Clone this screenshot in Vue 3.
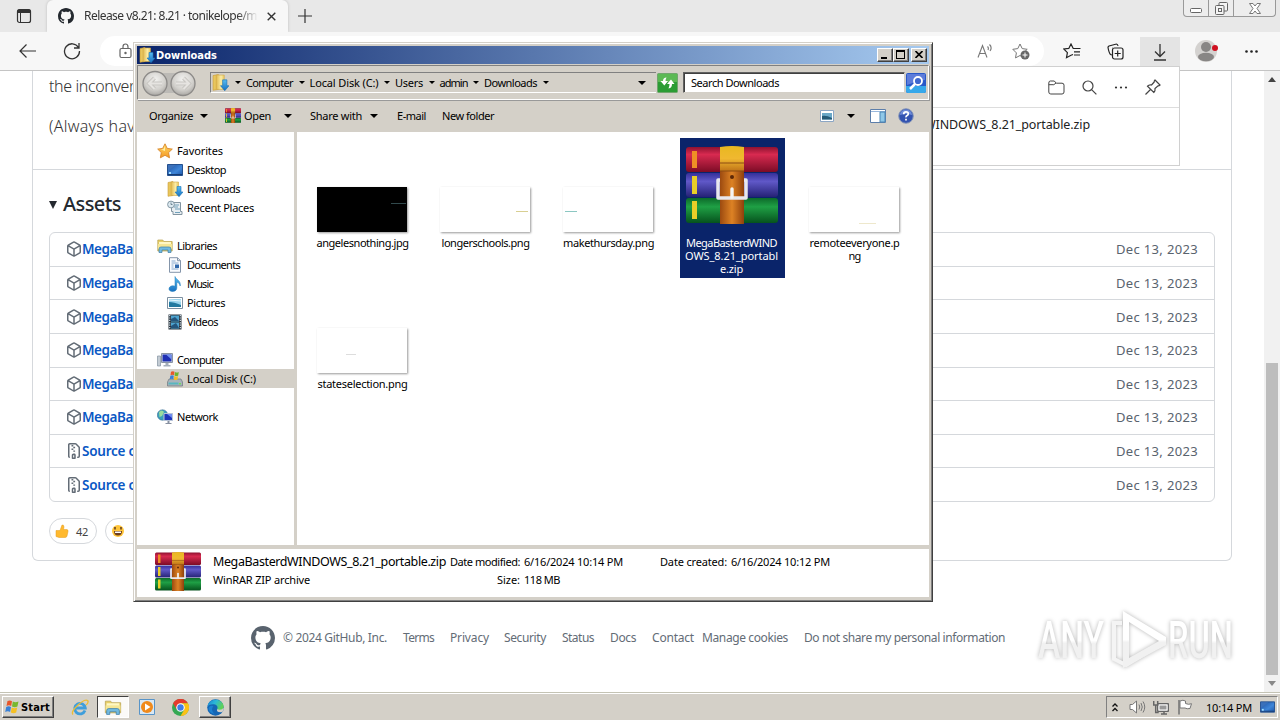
<script setup>
// Adjusts letter spacing so that a label takes the given width in pixels.
const vFit = {
  mounted(el, { value }) {
    const natural = el.getBoundingClientRect().width
    el.style.letterSpacing = (value - natural) / el.textContent.length + 'px'
  }
}

const assets = [
  ...Array.from({ length: 6 }, () => ({ icon: 'package', name: 'MegaBa', w: 51 })),
  { icon: 'zipfile', name: 'Source c', w: 53 },
  { icon: 'zipfile', name: 'Source c', w: 53 }
]
const footerLinks = [
  { t: 'Terms', w: 31, g: 16 }, { t: 'Privacy', w: 39, g: 16 }, { t: 'Security', w: 42, g: 15 },
  { t: 'Status', w: 32, g: 16 }, { t: 'Docs', w: 26, g: 16 }, { t: 'Contact', w: 42, g: 16 },
  { t: 'Manage cookies', w: 86, g: 8 }, { t: 'Do not share my personal information', w: 201, g: 16 }
]
const crumbs = [
  { t: 'Computer', w: 47 }, { t: 'Local Disk (C:)', w: 69 }, { t: 'Users', w: 28 },
  { t: 'admin', w: 28 }, { t: 'Downloads', w: 53 }
]
const tree = [
  { t: 'Favorites', i: 'star', w: 46, top: true }, { t: 'Desktop', i: 'desktop', w: 39 },
  { t: 'Downloads', i: 'downloads', w: 53 }, { t: 'Recent Places', i: 'recent', w: 67 }, null,
  { t: 'Libraries', i: 'libraries', w: 40, top: true }, { t: 'Documents', i: 'document', w: 53 },
  { t: 'Music', i: 'music', w: 26 }, { t: 'Pictures', i: 'picture', w: 38 },
  { t: 'Videos', i: 'video', w: 31 }, null,
  { t: 'Computer', i: 'computer', w: 47, top: true },
  { t: 'Local Disk (C:)', i: 'disk', w: 69, on: true }, null,
  { t: 'Network', i: 'network', w: 41, top: true }
]
const files = [
  { kind: 'black', lines: [['angelesnothing.jpg', 92]] },
  { kind: 'right', lines: [['longerschools.png', 88]] },
  { kind: 'left', lines: [['makethursday.png', 91]] },
  { kind: 'zip', on: true, lines: [['MegaBasterdWIND', 91], ['OWS_8.21_portabl', 93], ['e.zip', 23]] },
  { kind: 'low', lines: [['remoteeveryone.p', 90], ['ng', 12]] },
  { kind: 'mid', lines: [['stateselection.png', 90]] }
]
</script>

<template>
  <div class="screen">
    <svg class="defs" width="0" height="0">
      <defs>
        <linearGradient id="gRed" x1="0" y1="0" x2="0" y2="1"><stop offset="0" stop-color="#8e1230" /><stop offset=".3" stop-color="#d82a50" /><stop offset="1" stop-color="#7c0c26" /></linearGradient>
        <linearGradient id="gBlue" x1="0" y1="0" x2="0" y2="1"><stop offset="0" stop-color="#34309a" /><stop offset=".35" stop-color="#6058c8" /><stop offset="1" stop-color="#252275" /></linearGradient>
        <linearGradient id="gGreen" x1="0" y1="0" x2="0" y2="1"><stop offset="0" stop-color="#0d6a2a" /><stop offset=".35" stop-color="#1fa045" /><stop offset="1" stop-color="#06521d" /></linearGradient>
        <linearGradient id="gBelt" x1="0" y1="0" x2="1" y2="0"><stop offset="0" stop-color="#9c4a10" /><stop offset=".5" stop-color="#dd8224" /><stop offset="1" stop-color="#8f400c" /></linearGradient>
        <linearGradient id="gGold" x1="0" y1="0" x2="0" y2="1"><stop offset="0" stop-color="#e8b820" /><stop offset=".5" stop-color="#f0b830" /><stop offset="1" stop-color="#c07418" /></linearGradient>
        <linearGradient id="gSky" x1="0" y1="0" x2="1" y2="1"><stop offset="0" stop-color="#1d4e9e" /><stop offset=".6" stop-color="#3f86d8" /><stop offset="1" stop-color="#1c55a8" /></linearGradient>
        <linearGradient id="gFold" x1="0" y1="0" x2="1" y2="0"><stop offset="0" stop-color="#e0b84c" /><stop offset=".6" stop-color="#fbeca6" /><stop offset="1" stop-color="#e8c860" /></linearGradient>
        <linearGradient id="gArrow" x1="0" y1="0" x2="0" y2="1"><stop offset="0" stop-color="#58bdf2" /><stop offset="1" stop-color="#1670c0" /></linearGradient>
        <linearGradient id="gStar" x1="0" y1="0" x2="0" y2="1"><stop offset="0" stop-color="#ffd860" /><stop offset="1" stop-color="#f49a28" /></linearGradient>
        <linearGradient id="gEdge" x1="0" y1="0" x2="1" y2=".4"><stop offset="0" stop-color="#1b7fd0" /><stop offset=".5" stop-color="#2bb8d8" /><stop offset="1" stop-color="#5fd257" /></linearGradient>
        <linearGradient id="gMark" x1="0" y1="0" x2="0" y2="1"><stop offset=".5" stop-color="#fff" /><stop offset=".55" stop-color="#f1f1f1" /></linearGradient>
        <radialGradient id="gOrb" cx=".5" cy=".35" r=".6"><stop offset="0" stop-color="#f4f4f2" /><stop offset=".7" stop-color="#d2d0cc" /><stop offset="1" stop-color="#b2b0ac" /></radialGradient>
      </defs>
      <symbol id="winrar" viewBox="0 0 92 78" preserveAspectRatio="none">
        <rect x="0" y="1" width="92" height="25" rx="3" fill="url(#gRed)" />
        <rect x="0" y="27" width="92" height="24" rx="3" fill="url(#gBlue)" />
        <rect x="0" y="52" width="92" height="25" rx="3" fill="url(#gGreen)" />
        <path d="M6 5h5v17H6z" fill="#ef8f25" /><path d="M6 30h5v18H6zM6 55h5v18H6z" fill="#e9cf28" />
        <path d="M34 16h24v62H34z" fill="url(#gBelt)" />
        <path d="M34 1q12-2 24 0v24H34z" fill="url(#gGold)" />
        <path d="M34 17h24M34 25h24" stroke="#8c4c12" />
        <circle cx="46" cy="31" r="2" fill="#5c2808" />
        <path d="M34 34h-2v18h28V34h-2" fill="none" stroke="#e8e8ee" stroke-width="3.500" stroke-linejoin="round" />
        <path d="M46 43v8" stroke="#f4f4f4" stroke-width="3.400" stroke-linecap="round" />
      </symbol>
      <symbol id="github" viewBox="0 0 16 16"><path d="M8 0c4.42 0 8 3.58 8 8a8.013 8.013 0 0 1-5.45 7.59c-.4.08-.55-.17-.55-.38 0-.27.01-1.13.01-2.2 0-.75-.25-1.23-.54-1.48 1.78-.2 3.65-.88 3.65-3.95 0-.88-.31-1.59-.82-2.15.08-.2.36-1.02-.08-2.12 0 0-.67-.22-2.2.82-.64-.18-1.32-.27-2-.27-.68 0-1.36.09-2 .27-1.53-1.03-2.2-.82-2.2-.82-.44 1.1-.16 1.92-.08 2.12-.51.56-.82 1.28-.82 2.15 0 3.06 1.86 3.75 3.64 3.95-.23.2-.44.55-.51 1.07-.46.21-1.61.55-2.33-.66-.15-.24-.6-.83-1.23-.82-.67.01-.27.38.01.53.34.19.73.9.82 1.13.16.45.68 1.31 2.69.94 0 .67.01 1.3.01 1.49 0 .21-.15.45-.55.38A7.995 7.995 0 0 1 0 8c0-4.42 3.58-8 8-8Z" /></symbol>
      <symbol id="package" viewBox="0 0 16 16"><path d="m8.878.392 5.25 3.045c.54.314.872.89.872 1.514v6.098a1.75 1.75 0 0 1-.872 1.514l-5.25 3.045a1.75 1.75 0 0 1-1.756 0l-5.25-3.045A1.75 1.75 0 0 1 1 11.049V4.951c0-.624.332-1.201.872-1.514L7.122.392a1.75 1.75 0 0 1 1.756 0ZM7.875 1.69l-4.63 2.685L8 7.133l4.755-2.758-4.63-2.685a.248.248 0 0 0-.25 0ZM2.5 5.677v5.372c0 .09.047.171.125.216l4.625 2.683V8.432Zm6.25 8.271 4.625-2.683a.25.25 0 0 0 .125-.216V5.677L8.75 8.432Z" /></symbol>
      <symbol id="zipfile" viewBox="0 0 16 16"><path d="M3.5 1.75v11.5c0 .09.048.173.126.217a.75.75 0 0 1-.752 1.298A1.748 1.748 0 0 1 2 13.25V1.75C2 .784 2.784 0 3.75 0h5.586c.464 0 .909.185 1.237.513l2.914 2.914c.329.328.513.773.513 1.237v8.586A1.75 1.75 0 0 1 12.25 15h-.5a.75.75 0 0 1 0-1.5h.5a.25.25 0 0 0 .25-.25V4.664a.25.25 0 0 0-.073-.177L9.513 1.573a.25.25 0 0 0-.177-.073H3.75a.25.25 0 0 0-.25.25ZM8.75 10.5c.7.2 1 .9 1 1.75v3a.75.75 0 0 1-.75.75H6.5a.75.75 0 0 1-.75-.75v-3c0-.966.784-1.75 1.75-1.75ZM7.2 12.3v2.2h1v-2.200ZM5.500 2h1.800v1.400H5.500zM7.300 3.800h1.800v1.400H7.300zM5.500 5.600h1.800V7H5.500zM7.300 7.400h1.800v1.400H7.300z" /></symbol>
      <symbol id="star" viewBox="0 0 16 16"><path d="M8 .8 10.200 5.400l5.100.7-3.700 3.500.9 5.200L8 12.300l-4.600 2.500.9-5.200L.7 6.100l5-.7z" fill="url(#gStar)" stroke="#d8862a" stroke-width=".9" /><path d="M8 3v5l-4-1.400 2.500-.4z" fill="#fff0a8" /></symbol>
      <symbol id="desktop" viewBox="0 0 16 16"><path d="M.5 2.500h15v11H.5z" fill="url(#gSky)" stroke="#24508e" /><path d="M1 12.500h14" stroke="#163c74" /><path d="M2 10h2v2H2z" fill="#9fdcff" /><path d="M1 3h8l-8 6z" fill="#3c71ba" /></symbol>
      <symbol id="downloads" viewBox="0 0 16 16"><path d="M1 1.500 6 .5v14l-5 .8z" fill="#e8c65c" stroke="#c99c38" stroke-width=".6" /><path d="M4 1h7.500v13.500H4z" fill="url(#gFold)" stroke="#d0a848" stroke-width=".6" /><path d="M10 5.500h4V11h2l-4 4.700L8 11h2z" fill="url(#gArrow)" stroke="#1c74b8" stroke-width=".6" /></symbol>
      <symbol id="recent" viewBox="0 0 16 16"><path d="M4.500 2.500h9v9H15v3H6v-3H4.500z" fill="#e8eef2" stroke="#8294a0" /><path d="M7 5h5M7 7h4M8 9h5M8 12.500h5" stroke="#70a0ba" /><circle cx="4" cy="4.500" r="3.400" fill="#dce9f0" stroke="#8498a4" /><path d="M4 2.500v2h1.500" fill="none" stroke="#55707e" stroke-width=".8" /></symbol>
      <symbol id="libraries" viewBox="0 0 16 16"><path d="M.8 2h5l1 1.500h8.400V13H.8z" fill="#e8cf67" stroke="#b8a04e" stroke-width=".7" /><path d="M2 4h12v3H2z" fill="#fff7c4" /><path d="M2.500 7h11v3l-1 .5h-9l-1-.5z" fill="#9bd47c" /><path d="M1 6h14v5H1z" fill="#f5e695" /><path d="M2 14.500V11q0-2 2-2h8q2 0 2 2v3.500h-3V12H5v2.500z" fill="#71bae0" stroke="#3e7ea8" stroke-width=".7" /></symbol>
      <symbol id="document" viewBox="0 0 16 16"><path d="M2.500.7h8l3 3v11.600h-11z" fill="#fafcff" stroke="#8495aa" /><path d="M10.500.7v3h3" fill="none" stroke="#8495aa" /><path d="M4.500 4h4M4.500 6h7M4.500 8h2M4.500 10h2M4.500 12h7" stroke="#7aa0c8" stroke-width=".9" /><path d="M8 7.500h4v3.500H8z" fill="#3169ac" /></symbol>
      <symbol id="music" viewBox="0 0 16 16"><path d="M8 .5c1 3.500 6 3.500 5.200 9.500-.8-3-2-3.600-3.400-3.700V12c0 4.500-7.800 4.500-7.800 1 0-3 4-4 6-2.700z" fill="url(#gArrow)" stroke="#1b78b8" stroke-width=".5" /></symbol>
      <symbol id="picture" viewBox="0 0 16 16"><path d="M.5 2.500h15v11H.5z" fill="#fff" stroke="#7c8fa0" /><path d="M2 4h12v8H2z" fill="#9ad4ec" /><path d="M2 7q5 0 12 3v2H2z" fill="#247aa0" /><path d="M2 5l12 1" stroke="#e7f8ff" /></symbol>
      <symbol id="video" viewBox="0 0 16 16"><path d="M1.500.5h13v15h-13z" fill="#27323c" /><path d="M4 1.500h8v6H4zM4 8.500h8v6H4z" fill="#4da3cf" /><path d="M4 5l4-2 4 4H4zM4 12l5-3 3 5H4z" fill="#24557c" /><path d="M2.700 1v14M13.300 1v14" stroke="#d9e4ec" stroke-width="1.200" stroke-dasharray="1.200 1.200" /></symbol>
      <symbol id="computer" viewBox="0 0 16 16"><path d="M.5 4h3v10h-3z" fill="#c4ccd4" stroke="#8492a0" stroke-width=".7" /><path d="M4.500 1.500h11v9h-11z" fill="#d5dbe4" stroke="#8994a4" /><path d="M5.500 2.500h9v7h-9z" fill="#1f30b4" /><path d="M9 2.500h5.500v5z" fill="#7291ee" /><path d="M8.500 11h3v2h2v1.500h-7V13h2z" fill="#a5afbb" /></symbol>
      <symbol id="disk" viewBox="0 0 16 16"><path d="M2 8h12l1.500 3v4H.5v-4z" fill="#a9b3ba" stroke="#6c7780" stroke-width=".7" /><path d="M1.500 11.500h10v2h-10z" fill="#58b6c0" /><path d="M12 12h2v1.500h-2z" fill="#6be05c" /><path d="M4 .8q2-1 3.500 0L7 4.300q-1.800-1-3.500 0z" fill="#e8582c" /><path d="M8 1q2 1 3.800 0L11.200 4.500q-1.700 1-3.700 0z" fill="#6fb52c" /><path d="M3.300 4.800q1.800-1 3.500 0l-.5 3.500q-1.800-1-3.500 0z" fill="#3c80d4" /><path d="M7.300 5q2 1 3.800 0l-.6 3.500q-1.800 1-3.700 0z" fill="#f4bd26" /></symbol>
      <symbol id="network" viewBox="0 0 16 16"><circle cx="5.500" cy="6" r="5.200" fill="#3aa0bc" stroke="#3c6c94" stroke-width=".6" /><path d="M2 3q3-3 5 0L5 7 2.500 8zM7 6l3-2v3z" fill="#9bdc9d" /><path d="M7 4.500h8.500v7H7z" fill="#1e35bb" stroke="#b8c4d8" /><path d="M10 5h5v4z" fill="#6f8cf0" /><path d="M10.500 12h2v2h2v1h-6v-1h2z" fill="#8790a0" /></symbol>
      <symbol id="windows" viewBox="0 0 16 16"><path d="M3.500 2Q6 .7 8 2.200L7.200 7Q5 5.700 2.500 7z" fill="#e8562a" /><path d="M8.800 2.500q2.500 1.400 5.700 0L13.400 7.600q-2.700 1.300-5.400-.2z" fill="#78b82e" /><path d="M2.200 8q2.500-1.400 4.800 0l-.9 5Q4 11.700 1.200 13z" fill="#3981d7" /><path d="M7.700 8.500q2.700 1.400 5.500.1l-1 5q-2.800 1.400-5.400-.1z" fill="#f5c023" /></symbol>
    </svg>

    <div class="browser">
      <div class="tabs">
        <div class="tabmenu">
          <svg width="16" height="16" viewBox="0 0 16 16"><rect x="1.500" y="1.500" width="13" height="13" rx="2" fill="none" stroke="#333" stroke-width="1.200" /><path d="M1.500 2.500q0-1 1-1h11q1 0 1 1V5h-13z" fill="#333" /><path d="M4.500 5v9" stroke="#333" /></svg>
        </div>
        <div class="tab">
          <svg class="gh" width="16" height="16"><use href="#github" /></svg>
          <span class="tabtitle"><span v-fit="173">Release v8.21: 8.21 · tonikelope/m</span></span>
          <svg class="close" width="9" height="9" viewBox="0 0 9 9"><path d="m.7.700 7.600 7.600m0-7.600L.7 8.300" stroke="#333" stroke-width="1.400" /></svg>
        </div>
        <svg class="plus" width="14" height="14" viewBox="0 0 14 14"><path d="M7 0v14M0 7h14" stroke="#333" stroke-width="1.200" /></svg>
        <div class="caption">
          <span class="cb1"><svg width="12" height="5" viewBox="0 0 12 5"><rect x=".5" y=".5" width="11" height="4" rx="1" fill="#fff" stroke="#666" /></svg></span>
          <span class="cb2"><svg width="13" height="13" viewBox="0 0 13 13" fill="#f4f4f4" stroke="#666"><rect x="4" y=".5" width="8.500" height="8.500" rx="1" /><rect x=".5" y="3.500" width="8.500" height="9" rx="1" /><rect x="3.500" y="6.500" width="3" height="3" /></svg></span>
          <span class="cb3"><svg width="12" height="11" viewBox="0 0 12 11"><path d="M.5.500h3.500l2 2.500 2-2.500h3.500L8 5.500l3.500 5H8L6 8l-2 2.500H.5l3.500-5z" fill="#fff" stroke="#777" /></svg></span>
        </div>
      </div>

      <div class="toolbar">
        <svg class="back" width="18" height="14" viewBox="0 0 18 14" fill="none" stroke="#333" stroke-width="1.200"><path d="M17 7H1m6.500-6.500L1 7l6.500 6.500" /></svg>
        <svg class="reload" width="18" height="18" viewBox="0 0 18 18" fill="none" stroke="#333" stroke-width="1.300"><path d="M15.500 5.500A7.500 7.500 0 1 0 16.500 9M16 1v5h-5" /></svg>
        <div class="address">
          <svg class="lock" width="13" height="16" viewBox="0 0 13 16" fill="none" stroke="#666" stroke-width="1.200"><rect x="1" y="5.500" width="11" height="9" rx="1.500" /><path d="M4 5.500V4q0-3 2.500-3T9 4v1.500" /><circle cx="6.500" cy="10" r=".6" fill="#555" /></svg>
          <span class="grow"></span>
          <svg width="16" height="16" viewBox="0 0 16 16" fill="none" stroke="#777" stroke-width="1.100"><path d="m1 14.500 4.500-12 4.500 12M2.500 10.500h6M10.500 3.500q1.500 1.500.5 3.500M12.500 1.500q3 3 .5 6.500" /></svg>
          <svg class="fav" width="18" height="17" viewBox="0 0 18 17"><path d="m8 1 2.200 4.600 5 .7-3.600 3.500.8 5L8 12.500l-4.500 2.400.9-5L.8 6.300l5-.7z" fill="none" stroke="#777" /><circle cx="13" cy="12" r="4.500" fill="#666" /><path d="M10.500 12h5M13 9.500v5" stroke="#fff" /></svg>
        </div>
        <div class="tools">
          <svg class="t1" width="18" height="16" viewBox="0 0 18 16" fill="none" stroke="#222" stroke-width="1.200"><path d="M10 11.500 8 12.200l-4.500 2.500.9-5L.8 6l5-.6L8 1l2.200 4.500M10 5.500h7.500M11 8.800h6M11 12h6" /></svg>
          <svg class="t2" width="17" height="17" viewBox="0 0 17 17" fill="none" stroke="#222" stroke-width="1.200"><path d="M5 12 3.500 11.500Q2 10 1 4.500q0-1 1-1.500L9.500 1q1.200 0 1.500 2M6 5h-.5" /><rect x="5.500" y="5" width="10.500" height="11" rx="2" /><path d="M10.700 7.500v6M7.700 10.500h6" /></svg>
          <div class="dlbtn"><svg width="14" height="17" viewBox="0 0 14 17" fill="none" stroke="#333" stroke-width="1.300"><path d="M7 0v12M2 7.500 7 12.500l5-5M1 16h12" /></svg></div>
          <svg class="avatar" width="24" height="24" viewBox="0 0 24 24"><circle cx="12" cy="12" r="11" fill="#d4d2d0" /><circle cx="12" cy="8" r="5" fill="#888685" /><ellipse cx="12" cy="18" rx="8" ry="4.200" fill="#888685" /><circle cx="21" cy="9" r="3" fill="#d01020" /></svg>
          <svg class="more" width="13" height="3" viewBox="0 0 13 3" fill="#222"><circle cx="1.500" cy="1.500" r="1.300" /><circle cx="6.500" cy="1.500" r="1.300" /><circle cx="11.500" cy="1.500" r="1.300" /></svg>
        </div>
      </div>

      <div class="viewport">
        <div class="page">
          <section class="release">
            <div class="notes"><p><span v-fit="86">the inconver</span></p><p><span v-fit="86">(Always hav</span></p></div>
            <div class="assetwrap">
              <h3><i class="tri"></i><span v-fit="58">Assets</span></h3>
              <ul class="assets">
                <li v-for="(a, n) in assets" :key="n">
                  <svg width="16" height="16"><use :href="'#' + a.icon" /></svg>
                  <b v-fit="a.w">{{ a.name }}</b>
                  <span class="date"><span v-fit="82">Dec 13, 2023</span></span>
                </li>
              </ul>
              <div class="reactions">
                <span class="react"><svg width="14" height="14" viewBox="0 0 14 14"><path d="M1 6.500h4L7 1q2-.5 2 2l-.5 2.500H12q1.500.5 1 2l-1 4.500q-.5 1.500-2 1.500H4l-3-1z" fill="#ffb92e" stroke="#e29a1c" stroke-width=".5" /></svg><span v-fit="12">42</span></span>
                <span class="react"><svg width="14" height="14" viewBox="0 0 14 14"><circle cx="7" cy="7" r="6" fill="#ffc53a" /><path d="M3 7h8q0 4.500-4 4.500T3 7" fill="#6b3d1e" /><path d="M4 7.500h6V9H4z" fill="#fff" /><path d="M4 3v2.500M10 3v2.500" stroke="#5e3a20" stroke-width="1.500" /></svg></span>
              </div>
            </div>
          </section>
          <footer>
            <svg width="24" height="24"><use href="#github" /></svg>
            <span v-fit="104">© 2024 GitHub, Inc.</span>
            <span v-for="l in footerLinks" :key="l.t" :class="'g' + l.g"><span v-fit="l.w">{{ l.t }}</span></span>
          </footer>
        </div>
        <div class="scroll"><i class="up"></i><div class="thumb"></div><i class="down"></i></div>
      </div>
    </div>

    <div class="flyout">
      <div class="flyhead">
        <svg width="17" height="15" viewBox="0 0 17 15" fill="none" stroke="#444"><path d="M.8 3q0-2 1.500-2h4l2 2.200H14q2 0 2 2V12q0 2-2 2H2.800q-2 0-2-2zM.8 4.700h5L8 3" /></svg>
        <svg width="15" height="15" viewBox="0 0 15 15" fill="none" stroke="#444" stroke-width="1.200"><circle cx="6" cy="6" r="5" /><path d="m9.600 9.600 4.800 4.800" /></svg>
        <svg width="14" height="3" viewBox="0 0 14 3" fill="#333"><circle cx="2" cy="1.500" r="1.100" /><circle cx="7" cy="1.500" r="1.100" /><circle cx="12" cy="1.500" r="1.100" /></svg>
        <svg width="16" height="16" viewBox="0 0 16 16" fill="none" stroke="#444" stroke-width="1.200"><path d="M10 1l5 5q-1 1-2 .8L10 9.500q.5 2.500-1.200 4L2.500 7.200Q4 5.500 6.500 6L9.200 3Q9 2 10 1zM5.500 10.500l-5 5" /></svg>
      </div>
      <p><span v-fit="166">WINDOWS_8.21_portable.zip</span></p>
    </div>

    <svg class="watermark" width="230" height="80" viewBox="0 0 230 80">
      <g class="mark">
        <text x="7" y="52" font-size="51" textLength="66" lengthAdjust="spacingAndGlyphs">ANY</text>
        <text x="137" y="52" font-size="51" textLength="65" lengthAdjust="spacingAndGlyphs">RUN</text>
        <path d="M91 17h-8v36l12 6 37-22" fill="none" stroke="#f4f4f4" stroke-width="4" />
        <path d="M92 5 135 31v8L92 62zM98 16v36l30-17z" fill="url(#gMark)" fill-rule="evenodd" />
      </g>
    </svg>

    <div class="window">
      <div class="titlebar">
        <svg width="16" height="16"><use href="#downloads" /></svg><b v-fit="61">Downloads</b>
        <span class="grow"></span>
        <span class="wb"><i class="min"></i></span><span class="wb"><i class="max"></i></span>
        <span class="wb x"><svg width="8" height="7" viewBox="0 0 8 7"><path d="m.5 0 7 7m0-7-7 7" stroke="#000" stroke-width="1.600" /></svg></span>
      </div>
      <div class="nav">
        <svg class="orbs" width="54" height="27" viewBox="0 0 54 27"><path d="M13 3h28v20H13z" fill="#bcbab6" /><circle cx="13" cy="13.500" r="12" fill="url(#gOrb)" stroke="#8c8a88" stroke-width="1.300" /><circle cx="41" cy="13.500" r="12" fill="url(#gOrb)" stroke="#8c8a88" stroke-width="1.300" /><path d="M20 13.500H7m5.500-5.500L7 13.500l5.500 5.500M34 13.500h13M41.500 8l5.500 5.500-5.500 5.500" fill="none" stroke="#c8c6c2" stroke-width="4" /><path d="M20 13.500H7m5.500-5.500L7 13.500l5.500 5.500M34 13.500h13M41.500 8l5.500 5.500-5.500 5.500" fill="none" stroke="#e6e4e1" stroke-width="2" /></svg>
        <div class="crumbs">
          <svg width="17" height="17"><use href="#downloads" /></svg><i class="sm first"></i>
          <template v-for="c in crumbs" :key="c.t"><span class="crumb"><span v-fit="c.w">{{ c.t }}</span></span><i class="sm"></i></template>
          <span class="grow"></span><i class="lg drop"></i>
        </div>
        <svg class="refresh" width="21" height="20" viewBox="0 0 21 20"><rect x=".5" y=".5" width="20" height="19" rx="1" fill="#2b9c34" stroke="#71a66d" /><path d="M1 1h19v8H1z" fill="#5cb954" /><path d="M9.500 4.500Q6 4.500 6 8H3.500l3.800 4.500L11 8H8.500q0-2 1-3.500zM11.500 15.500Q15 15 15 11h2.500L14 6.500 10 11h2.500q0 2.500-1 4.500z" fill="#fff" /></svg>
        <div class="search"><span v-fit="88">Search Downloads</span></div>
        <svg class="go" width="20" height="20" viewBox="0 0 20 20"><rect width="20" height="20" rx="2" fill="#2858c8" /><path d="M0 13h20v5q0 2-2 2H2q-2 0-2-2z" fill="#36a8ea" /><path d="M1 1h18v6Q10 8 1 12z" fill="#5d7cda" /><circle cx="12" cy="8" r="4" fill="#3f68ce" stroke="#fff" stroke-width="1.800" /><path d="m9 11-5 5" stroke="#fff" stroke-width="2.500" /></svg>
      </div>
      <div class="cmds">
        <span v-fit="44">Organize</span><i class="lg a1"></i>
        <svg class="rar" width="16" height="15"><use href="#winrar" /></svg><span v-fit="27">Open</span><i class="lg a2"></i>
        <span class="share"><span v-fit="52">Share with</span></span><i class="lg a3"></i>
        <span class="mail"><span v-fit="29">E-mail</span></span><span class="newf"><span v-fit="52">New folder</span></span>
        <span class="grow"></span>
        <svg width="14" height="12" viewBox="0 0 14 12"><path d="M.5.500h13v11H.5z" fill="#fff" stroke="#8ca6c4" /><path d="M2 3h10v6.500H2z" fill="#6aa8c8" /><path d="M2 6q4-1 10 2v1.500H2z" fill="#245a78" /></svg>
        <i class="lg a4"></i>
        <svg class="pane" width="16" height="14" viewBox="0 0 16 14"><path d="M.5.500h15v13H.5z" fill="#fff" stroke="#5c7eaa" /><path d="M1 2.500h14" stroke="#9ab8dc" /><path d="M10 3h5v10h-5z" fill="#8fc8e8" stroke="#4c86b4" /></svg>
        <svg class="help" width="16" height="16" viewBox="0 0 16 16"><circle cx="8" cy="8" r="7.300" fill="#3353b0" stroke="#8898b8" /><path d="M2 7a6 5.500 0 0 1 12 0q-6-2-12 0" fill="#6f8cd8" /><path d="M5.700 6.200q0-2.400 2.300-2.400t2.300 2q0 1.200-1.200 1.800T8 9.300M8 10.700v1.700" fill="none" stroke="#fff" stroke-width="1.700" /></svg>
      </div>
      <div class="body">
        <div class="tree">
          <div v-for="(t, n) in tree" :key="n" class="trow" :class="{ top: t && t.top, on: t && t.on }">
            <template v-if="t"><svg width="16" height="16"><use :href="'#' + t.i" /></svg><span v-fit="t.w">{{ t.t }}</span></template>
          </div>
        </div>
        <div class="files">
          <div v-for="(f, n) in files" :key="n" class="file" :class="{ on: f.on }">
            <div class="pic">
              <svg v-if="f.kind === 'zip'" class="bigzip" width="92" height="78"><use href="#winrar" /></svg>
              <div v-else class="shot" :class="f.kind"><i></i></div>
            </div>
            <div v-for="l in f.lines" :key="l[0]" class="line"><span v-fit="l[1]">{{ l[0] }}</span></div>
          </div>
        </div>
      </div>
      <div class="details">
        <svg width="46" height="39"><use href="#winrar" /></svg>
        <div class="dgrid">
          <span class="big"><span v-fit="233">MegaBasterdWINDOWS_8.21_portable.zip</span></span>
          <span class="r"><span v-fit="70">Date modified:</span></span><span><span v-fit="99">6/16/2024 10:14 PM</span></span>
          <span class="r"><span v-fit="67">Date created:</span></span><span><span v-fit="99">6/16/2024 10:12 PM</span></span>
          <span><span v-fit="97">WinRAR ZIP archive</span></span>
          <span class="r"><span v-fit="23">Size:</span></span><span><span v-fit="36">118 MB</span></span>
        </div>
      </div>
    </div>

    <div class="taskbar">
      <div class="start"><svg width="16" height="16"><use href="#windows" /></svg><b v-fit="29">Start</b></div>
      <svg class="ie" width="18" height="17" viewBox="0 0 18 17" fill="none"><path d="M14 11.500A5.300 5.300 0 1 1 14.300 9H5" stroke="#3f9edb" stroke-width="2.800" /><path d="M2 15.500Q-.5 13 7 6T17 2q.5 2-2 4" stroke="#ecbd35" stroke-width="1.300" /></svg>
      <div class="task pressed"><svg width="18" height="17"><use href="#libraries" /></svg></div>
      <svg class="wmp" width="16" height="16" viewBox="0 0 16 16"><path d="M.5.500h15v15H.5z" fill="#d9e8f4" stroke="#5894c8" /><circle cx="8" cy="8" r="6" fill="#f08a1c" /><path d="m6 4.500 5.500 3.500L6 11.500z" fill="#fff" /></svg>
      <svg class="chrome" width="17" height="17" viewBox="0 0 16 16"><circle cx="8" cy="8" r="8" fill="#34a853" /><path d="M1 4a8 8 0 0 1 14 0H8L4.600 10z" fill="#e33b2e" /><path d="M15 4H8l3.500 6L8 16A8 8 0 0 0 15 4z" fill="#fbc116" /><circle cx="8" cy="8" r="4" fill="#fff" /><circle cx="8" cy="8" r="3" fill="#3f7de8" /></svg>
      <div class="task raised"><svg width="17" height="17" viewBox="0 0 16 16"><circle cx="8" cy="8" r="7.800" fill="#1465b4" /><path d="M.4 7.500C1-1.500 15-1.500 15.700 7c.2 4-5 4.500-6.200 2.700C11 7 8.500 4.500 5.500 5 3 5.200 1 6 .4 7.500z" fill="url(#gEdge)" /><path d="M9.500 9.700q-1 3.300 5 2.600Q16 11 15.600 8q-1.400 3-6.100 1.700z" fill="#d4d0c8" /><path d="M6 6.500q-3 4 1 7.500Q1 13 1.500 8.500 2.500 5.500 6 6.500z" fill="#1b80d0" /></svg></div>
      <span class="grow"></span>
      <div class="tray">
        <svg width="6" height="9" viewBox="0 0 6 9" fill="none" stroke="#111" stroke-width="1.300"><path d="m.5 3.500 2.500-2.500 2.500 2.500M.5 8 3 5.500 5.500 8" /></svg>
        <svg class="spk" width="17" height="14" viewBox="0 0 17 14" fill="#fff" stroke="#777"><path d="M1 4.500h2.500L7.500 1v12L3.500 9.500H1z" /><path d="M10 4.500q1.500 2.500 0 5M12 3q2.500 4 0 8M14 1.500q3.500 5.500 0 11" fill="none" /></svg>
        <svg class="net" width="16" height="15" viewBox="0 0 16 15"><path d="M4.500 3.500h11v8h-11z" fill="#ababab" stroke="#666" /><path d="M6 5h8v5H6z" fill="#999" stroke="#fff" /><path d="M8 14h6M11 12v2" stroke="#666" stroke-width="1.500" /><path d="M.7 1v4h4V1M2.700 5v7.500h3" fill="none" stroke="#666" stroke-width="1.500" /></svg>
        <svg class="flag" width="16" height="16" viewBox="0 0 16 16"><path d="M2 1v14.500" stroke="#777" stroke-width="1.600" /><path d="M3 2q3-1.500 5.500 0v2.500q3 1.500 6 .2L13 9.500q-3 .7-5-.5H3z" fill="#fff" stroke="#777" /></svg>
        <span class="time"><span v-fit="46">10:14 PM</span></span>
        <svg class="dsk" width="15" height="16"><use href="#desktop" /></svg>
      </div>
    </div>
  </div>
</template>

<style>
body { margin: 0; overflow: hidden; }
</style>

<style scoped>
.screen { position: relative; width: 1280px; height: 720px; overflow: hidden; display: flex; flex-direction: column; background: #fff; font: 11px/13px "Noto Sans", "Open Sans", sans-serif; color: #000; white-space: nowrap; }
.screen * { box-sizing: border-box; }
svg { display: block; flex: none; }
span { display: inline-block; flex: none; }
.defs { position: absolute; }
.grow { flex: 1; }
i { display: block; flex: none; }

.browser { height: 692px; display: flex; flex-direction: column; }
.tabs { height: 32px; flex: none; background: #e8e8e8; display: flex; }
.tabmenu { width: 47px; padding: 8px 0 0 16px; }
.tab { width: 241px; background: #f7f7f7; border-radius: 6px 6px 0 0; box-shadow: 0 0 3px #bbb; clip-path: inset(0 -4px 0 -4px); display: flex; align-items: center; padding-left: 11px; }
.gh { fill: #24292f; }
.tabtitle { width: 174px; margin-left: 10px; font-size: 12px; line-height: 18px; color: #333; -webkit-mask-image: linear-gradient(90deg, #000 88%, transparent); mask-image: linear-gradient(90deg, #000 88%, transparent); }
.close { margin-left: 9px; }
.plus { margin: 9px 0 0 10px; }
.caption { height: 17px; margin: 0 4px 0 auto; display: flex; border: 1px solid #999; border-top: 0; border-radius: 0 0 4px 4px; background: #ededed; }
.cb1, .cb2, .cb3 { border-right: 1px solid #999; display: flex; justify-content: center; }
.cb1 { width: 25px; padding-top: 8px; }
.cb2 { width: 25px; padding-top: 2px; }
.cb3 { width: 41px; padding-top: 3px; border: 0; }
.toolbar { height: 39px; flex: none; background: #f7f7f7; border-bottom: 1px solid #c4c4c4; display: flex; align-items: center; }
.back { margin-left: 19px; }
.reload { margin-left: 26px; }
.address { width: 944px; height: 30px; margin-left: 19px; border-radius: 15px; background: #fff; display: flex; align-items: center; padding: 0 14px 0 19px; }
.fav { margin-left: 19px; }
.tools { display: flex; align-items: center; height: 38px; }
.t1 { margin-left: 19px; }
.t2 { margin-left: 26px; }
.dlbtn { width: 40px; height: 30px; margin: 5px 0 3px 16px; background: #e4e4e4; display: flex; align-items: center; justify-content: center; }
.avatar { margin-left: 14px; }
.more { margin-left: 27px; }

.viewport { flex: 1; display: flex; min-height: 0; }
.page { width: 1264px; }
.release { width: 1200px; height: 490px; margin-left: 32px; border: 1px solid #d5d8dc; border-top: 0; border-radius: 0 0 6px 6px; }
.notes { height: 99px; border-bottom: 1px solid #d5d8dc; padding: 3px 0 0 16px; font-size: 16px; color: #333; font-weight: 300; }
.notes p { margin: 0; line-height: 24px; height: 40px; }
.assetwrap { padding: 22px 16px 0; }
h3 { margin: 0; height: 40px; display: flex; align-items: flex-start; font: 500 20px/24px "Noto Sans", sans-serif; color: #24292f; }
.tri { width: 0; height: 0; border: 4.500px solid transparent; border-top: 8px solid #24292f; border-bottom: 0; margin: 9px 6px 0 0; }
.assets { list-style: none; margin: 0; padding: 0; border: 1px solid #d5d8dc; border-radius: 6px; height: 270px; display: flex; flex-direction: column; }
.assets li { flex: 1; display: flex; align-items: center; padding: 0 16px; border-bottom: 1px solid #d5d8dc; font-size: 13.500px; line-height: 20px; }
.assets li:last-child { border: 0; }
.assets svg { fill: #636c76; }
.assets b { color: #0a58c4; font-weight: 600; }
.date { margin-left: auto; color: #59636e; font-size: 13px; }
.reactions { display: flex; gap: 8px; margin-top: 16px; }
.react { height: 26px; width: 48px; border: 1px solid #d5d8dc; border-radius: 13px; display: flex; align-items: center; gap: 7px; padding-left: 5px; color: #444; }
footer { margin: 64px 0 0 251px; height: 26px; display: flex; align-items: center; font-size: 12px; line-height: 18px; color: #636c76; }
footer svg { fill: #59636e; margin-right: 8px; }
.g16 { margin-left: 16px; }
.g15 { margin-left: 15px; }
.g8 { margin-left: 8px; }
.scroll { width: 16px; background: #f1f1f1; display: flex; flex-direction: column; align-items: center; }
.up { border: 4px solid transparent; border-bottom: 5px solid #444; border-top: 0; margin-top: 6px; }
.thumb { width: 12px; height: 312px; margin-top: 281px; background: #bdbdbd; }
.down { border: 4px solid transparent; border-top: 5px solid #888; border-bottom: 0; margin-top: 6px; }

.flyout { position: absolute; left: 880px; top: 66px; width: 300px; height: 100px; background: #fff; border: 1px solid #d0d0d0; }
.flyhead { height: 41px; border-bottom: 1px solid #ddd; display: flex; align-items: center; justify-content: flex-end; gap: 17px; padding-right: 18px; }
.flyout p { margin: 9px 0 0 43px; font-size: 12.500px; line-height: 16px; color: #222; }

.watermark { position: absolute; left: 1031px; top: 606px; overflow: visible; }
.mark { fill: url(#gMark); filter: drop-shadow(0 0 2px #b4b4b4); }
.mark text { font-family: Roboto, sans-serif; font-weight: 500; }

.window { position: absolute; left: 133px; top: 42px; width: 800px; height: 560px; background: #d4d0c8; border: 1px solid #d4d0c8; border-right-color: #404040; border-bottom-color: #404040; box-shadow: inset 1px 1px #fff, inset -1px -1px #808080; padding: 3px; display: flex; flex-direction: column; }
.titlebar { height: 18px; flex: none; background: linear-gradient(90deg, #0a246a, #a6caf0); display: flex; align-items: center; padding: 0 2px; color: #fff; }
.titlebar b { font: bold 11px/13px "DejaVu Sans Condensed", "DejaVu Sans", sans-serif; margin-left: 1px; }
.wb { width: 16px; height: 14px; background: #d4d0c8; border: 1px solid #fff; border-right-color: #404040; border-bottom-color: #404040; box-shadow: inset -1px -1px #808080; }
.wb.x { margin-left: 2px; padding: 2px 0 0 3px; }
.min { width: 6px; height: 2px; background: #000; margin: 8px 0 0 3px; }
.max { width: 9px; height: 9px; border: 1px solid #000; border-top-width: 2px; margin: 1px 0 0 2px; }
.nav { height: 35px; flex: none; margin-top: 1px; border: 1px solid #808080; border-right-color: #fff; border-bottom-color: #fff; box-shadow: 1px 1px #999; display: flex; align-items: center; padding-left: 4px; }
.orbs { margin-top: 2px; }
.crumbs { width: 446px; height: 21px; margin-left: 14px; border: 1px solid #808080; border-right: 0; border-bottom-color: #fff; display: flex; align-items: center; padding-left: 1px; }
.crumb { margin-bottom: 1px; }
.sm { width: 0; height: 0; border: 3px solid transparent; border-top: 3px solid #000; border-bottom: 0; margin: 0 5px 0 5.500px; }
.sm.first { margin-left: 6px; margin-right: 5px; }
.lg { width: 0; height: 0; border: 4px solid transparent; border-top: 4px solid #000; border-bottom: 0; }
.drop { margin-right: 10px; }
.refresh { margin-left: 1px; }
.search { width: 222px; height: 21px; margin-left: 5px; border: 1px solid #606060; border-right-color: #d4d0c8; border-bottom-color: #d4d0c8; box-shadow: inset 1px 1px #404040; background: #fff; padding: 3px 0 0 7px; }
.go { margin-left: 1px; }
.cmds { height: 32px; flex: none; display: flex; align-items: center; padding: 0 15px 1px 12px; }
.a1 { margin-left: 7px; }
.rar { margin: 0 3px 0 17px; }
.a2 { margin-left: 13px; }
.share { margin-left: 18px; }
.a3 { margin-left: 8px; }
.mail { margin-left: 19px; }
.newf { margin-left: 16px; }
.a4 { margin: 0 15px 0 13px; }
.help { margin-left: 12px; }
.body { height: 413px; flex: none; display: flex; background: #fff; }
.tree { width: 160px; border-right: 3px solid #d4d0c8; padding-top: 9px; }
.trow { height: 19px; display: flex; align-items: center; gap: 4px; padding-left: 30px; }
.trow.top { padding-left: 20px; }
.trow.on { background: #d4d0c8; }
.files { padding: 6px 0 0 14px; display: grid; grid-template-columns: repeat(5, 105px); grid-auto-rows: 140px; gap: 1px 18px; align-content: start; }
.file { display: flex; flex-direction: column; align-items: center; padding-right: 2px; }
.file.on { background: #0a246a; color: #fff; }
.pic { height: 98px; display: flex; align-items: flex-end; flex: none; }
.bigzip { margin-bottom: 12px; }
.line { height: 13px; }
.shot { width: 90px; height: 45px; margin: 0 2px 4px 0; box-shadow: 1px 1px 2px #999; background: #fff; padding-top: 24px; }
.shot i { width: 12px; height: 1px; background: #d8cf92; }
.shot.black { background: #000; padding-top: 16px; }
.black i { margin-left: 74px; width: 15px; background: #31494c; }
.right i { margin-left: 76px; }
.left i { margin-left: 2px; background: #8cc7c2; }
.low { padding-top: 36px; }
.low i { margin-left: 50px; width: 17px; background: #eee8cc; }
.mid { padding-top: 26px; }
.mid i { margin-left: 29px; width: 10px; background: #ddd; }
.details { height: 48px; margin-top: 4px; background: #fff; display: flex; padding: 3px 0 0 18px; }
.dgrid { display: grid; grid-template-columns: 236px 71px 140px 67px auto; grid-auto-rows: 18px; margin-left: 12px; line-height: 19px; }
.dgrid > span:nth-child(3), .dgrid > span:nth-child(5), .dgrid > span:nth-child(8) { padding-left: 4px; }
.big { font-size: 12.500px; }
.r { text-align: right; }

.taskbar { height: 28px; flex: none; background: #d4d0c8; border-top: 1px solid #c4c3b4; box-shadow: inset 0 1px #fff; display: flex; align-items: center; padding: 1px 2px 0; }
.start { width: 52px; height: 22px; border: 1px solid #fff; border-right-color: #404040; border-bottom-color: #404040; box-shadow: inset -1px -1px #808080; display: flex; align-items: center; padding-left: 1px; }
.start b { font: bold 11px/13px "DejaVu Sans Condensed", "DejaVu Sans", sans-serif; margin-left: 1px; }
.ie { margin-left: 17px; }
.task { width: 32px; height: 22px; display: flex; align-items: center; justify-content: center; }
.pressed { margin-left: 8px; background: #fbfaf8; border: 1px solid #404040; border-right-color: #fff; border-bottom-color: #fff; }
.raised { margin-left: 10px; border: 1px solid #fff; border-right-color: #404040; border-bottom-color: #404040; box-shadow: inset -1px -1px #808080; }
.wmp { margin-left: 10px; }
.chrome { margin-left: 17px; }
.tray { width: 172px; height: 22px; border: 1px solid #808080; border-right-color: #fff; border-bottom-color: #fff; display: flex; align-items: center; padding-left: 5px; }
.spk { margin-left: 11px; }
.net { margin-left: 7px; }
.flag { margin-left: 8px; }
.time { margin-left: 13px; }
.dsk { margin-left: 8px; }
</style>
